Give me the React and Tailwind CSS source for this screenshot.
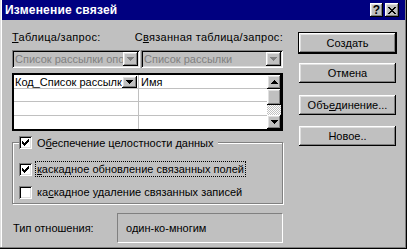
import React from 'react';

const raised = 'shadow-[inset_-1px_-1px_#000,inset_1px_1px_#fff,inset_-2px_-2px_#808080,inset_2px_2px_#dfdfdf]';
const sunken = 'shadow-[inset_1px_1px_#808080,inset_-1px_-1px_#fff,inset_2px_2px_#000,inset_-2px_-2px_#dfdfdf]';

function Arrow({ up, color = '#000' }) {
  return (
    <svg width="7" height="4" viewBox="0 0 7 4" shapeRendering="crispEdges">
      {up ? (
        <path d="M3 0h1v1h1v1h1v1h1v1H0V3h1V2h1V1h1z" fill={color} />
      ) : (
        <path d="M0 0h7v1H6v1H5v1H4v1H3V3H2V2H1V1H0z" fill={color} />
      )}
    </svg>
  );
}

function DropButton({ disabled }) {
  return (
    <span className={`w-[15px] h-[14px] bg-[#c0c0c0] flex items-center justify-center shrink-0 ${raised}`}>
      <Arrow color={disabled ? '#808080' : '#000'} />
    </span>
  );
}

function Check({ checked }) {
  return (
    <span className={`w-[13px] h-[13px] bg-white shrink-0 flex items-center justify-center ${sunken}`}>
      {checked && (
        <svg width="7" height="7" viewBox="0 0 7 7" shapeRendering="crispEdges">
          <path d="M6 0h1v3H6v1H5v1H4v1H3v1H2V6H1V5H0V2h1v1h1v1h1V3h1V2h1V1h1z" fill="#000" />
        </svg>
      )}
    </span>
  );
}

function Button({ children, primary }) {
  if (primary) {
    return (
      <div className="border border-black w-[99px] h-[22px]">
        <div className={`h-full bg-[#c0c0c0] flex items-center justify-center ${raised}`}>{children}</div>
      </div>
    );
  }
  return (
    <div className={`w-[97px] h-[20px] ml-[1px] bg-[#c0c0c0] flex items-center justify-center ${raised}`}>
      {children}
    </div>
  );
}

export default function App() {
  return (
    <div className="w-[407px] h-[249px] bg-[#c0c0c0] px-[2px] pb-[3px] flex flex-col font-['Liberation_Sans',Arial,sans-serif] text-[11px] leading-[14px] text-black whitespace-nowrap shadow-[inset_-1px_-1px_#000,inset_-2px_-2px_#808080,inset_1px_0_#dfdfdf,inset_2px_0_#fff]">
      {/* заголовок */}
      <div className="h-[20px] bg-[#000080] flex items-center justify-between pl-[3px] pr-[6px] shrink-0">
        <span className="text-white font-bold text-[12px] tracking-[0.2px]">Изменение связей</span>
        <div className="flex gap-[2px]">
          <span className={`w-[13px] h-[14px] bg-[#c0c0c0] flex items-center justify-center font-bold text-[12px] leading-none ${raised}`}>?</span>
          <span className={`w-[14px] h-[14px] bg-[#c0c0c0] flex items-center justify-center ${raised}`}>
            <svg width="8" height="7" viewBox="0 0 8 7" shapeRendering="crispEdges">
              <path d="M0 0h2v1h1v1h2V1h1V0h2v1H7v1H6v1H5v1h1v1h1v1h1v1H6V6H5V5H3v1H2v1H0V6h1V5h1V4h1V3H2V2H1V1H0z" fill="#000" />
            </svg>
          </span>
        </div>
      </div>

      <div className="flex flex-1 pl-[10px]">
        {/* левая часть */}
        <div className="w-[271px] flex flex-col">
          <div className="flex mt-[10px] tracking-[0.3px]">
            <span className="w-[128px]"><u>Т</u>аблица/запрос:</span>
            <span>С<u>в</u>язанная таблица/запрос:</span>
          </div>

          <div className="flex gap-[1px] mt-[6px] h-[18px]">
            <div className={`w-[128px] flex items-center justify-between pl-[3px] pr-[2px] text-[#808080] ${sunken}`}>
              <span className="overflow-hidden">Список рассылки опо</span>
              <DropButton disabled />
            </div>
            <div className={`flex-1 flex items-center justify-between pl-[3px] pr-[2px] text-[#808080] ${sunken}`}>
              <span>Список рассылки</span>
              <DropButton disabled />
            </div>
          </div>

          <div className="mt-[5px] h-[58px] border-2 border-black bg-white flex">
            <div className="flex-1 flex flex-col">
              {[0, 1, 2, 3].map((r) => (
                <div key={r} className={`flex h-[14px] ${r < 3 ? 'border-b border-[#c0c0c0]' : ''}`}>
                  <div className="w-[125px] border-r border-[#c0c0c0] flex items-center justify-between pl-[1px] pr-[1px]">
                    {r === 0 && (
                      <>
                        <span className="overflow-hidden">Код_Список рассылк</span>
                        <span className={`w-[15px] h-[12px] bg-[#c0c0c0] flex items-center justify-center shrink-0 ${raised}`}>
                          <Arrow />
                        </span>
                      </>
                    )}
                  </div>
                  <div className="flex-1 pl-[2px] flex items-center">{r === 0 && 'Имя'}</div>
                </div>
              ))}
            </div>
            {/* полоса прокрутки */}
            <div className="w-[14px] flex flex-col">
              <span className={`h-[14px] bg-[#c0c0c0] flex items-center justify-center ${raised}`}>
                <Arrow up />
              </span>
              <span className={`h-[16px] bg-[#c0c0c0] ${raised}`} />
              <span className="flex-1 bg-[image:repeating-conic-gradient(#fff_0_25%,#c0c0c0_0_50%)] bg-[length:2px_2px]" />
              <span className={`h-[14px] bg-[#c0c0c0] flex items-center justify-center ${raised}`}>
                <Arrow />
              </span>
            </div>
          </div>

          <fieldset className="mt-[5px] border border-[#808080] shadow-[inset_1px_1px_#fff,1px_1px_#fff] pl-[6px] pb-[4px]">
            <legend className="flex items-center gap-[5px] pr-[5px] bg-[#c0c0c0] h-[13px]">
              <Check checked />
              <span>О<u>б</u>еспечение целостности данных</span>
            </legend>
            <div className="flex items-center gap-[3px] mt-[12px]">
              <Check checked />
              <span className="border border-dotted border-black px-[1px] h-[16px] flex items-center">
                <u>к</u>аскадное обновление связанных полей
              </span>
            </div>
            <div className="flex items-center gap-[5px] mt-[8px]">
              <Check />
              <span>ка<u>с</u>кадное удаление связанных записей</span>
            </div>
          </fieldset>

          <div className="flex items-center mt-[9px]">
            <span className="w-[105px] pl-[1px]">Тип отношения:</span>
            <div className="flex-1 h-[30px] border border-t-[#808080] border-l-[#808080] border-b-white border-r-white flex items-center pl-[8px]">
              один-ко-многим
            </div>
          </div>
        </div>

        {/* кнопки */}
        <div className="ml-[15px] w-[99px] flex flex-col pt-[12px]">
          <Button primary>
            Соз<u>д</u>ать
          </Button>
          <div className="mt-[9px]">
            <Button>Отмена</Button>
          </div>
          <div className="mt-[12px]">
            <Button>
              Объ<u>е</u>динение...
            </Button>
          </div>
          <div className="mt-[11px]">
            <Button>Новое..</Button>
          </div>
        </div>
      </div>
    </div>
  );
}
